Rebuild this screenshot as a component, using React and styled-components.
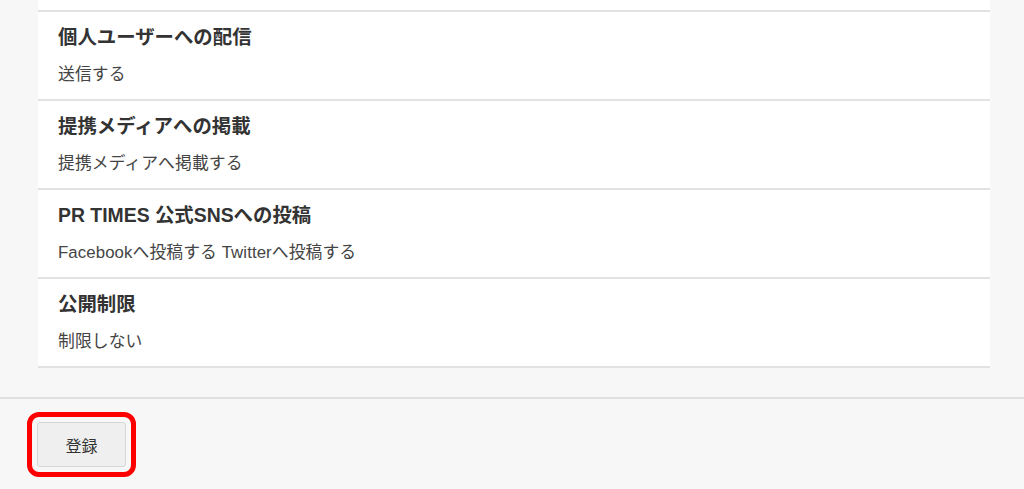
import React from 'react'
import styled, { createGlobalStyle } from 'styled-components'

const GlobalStyle = createGlobalStyle`
  html, body {
    margin: 0;
    padding: 0;
    background: #f7f7f7;
  }
  body {
    font-family: "Liberation Sans", "Noto Sans CJK JP", sans-serif;
    color: #333;
  }
`

const settings = [
  { title: '個人ユーザーへの配信', value: '送信する' },
  { title: '提携メディアへの掲載', value: '提携メディアへ掲載する' },
  { title: 'PR TIMES 公式SNSへの投稿', value: 'Facebookへ投稿する Twitterへ投稿する' },
  { title: '公開制限', value: '制限しない' },
]

const App = () => {
  return (
    <Page>
      <GlobalStyle />
      <Panel>
        <PrevTail />
        {settings.map((s, i) => (
          <Row key={i}>
            <Title>{s.title}</Title>
            <Value>{s.value}</Value>
          </Row>
        ))}
      </Panel>
      <Footer>
        <Highlight>
          <SubmitButton type="button">登録</SubmitButton>
        </Highlight>
      </Footer>
    </Page>
  )
}

const Page = styled.div`
  width: 1024px;
  height: 489px;
  overflow: hidden;
  display: flex;
  flex-direction: column;
`

const Panel = styled.div`
  margin: 0 34px 0 38px;
  background: #fff;
  border-bottom: 2px solid #e2e2e2;
`

const PrevTail = styled.div`
  height: 10px;
`

const Row = styled.div`
  border-top: 2px solid #e2e2e2;
  padding: 13px 20px 12px;
  display: flex;
  flex-direction: column;
  gap: 14px;
`

const Title = styled.div`
  font-size: 19.4px;
  line-height: 24px;
  font-weight: bold;
  color: #333;
`

const Value = styled.div`
  font-size: 16.8px;
  line-height: 24px;
  color: #444;
  letter-spacing: 0.1px;
`

const Footer = styled.div`
  margin-top: 29px;
  border-top: 2px solid #e0e0e0;
  padding: 13px 0 0 27px;
  display: flex;
`

const Highlight = styled.div`
  display: inline-flex;
  padding: 5px;
  border: 5px solid #ff0000;
  border-radius: 12px;
`

const SubmitButton = styled.button`
  width: 89px;
  height: 45px;
  background: #efefef;
  border: 1px solid #d6d6d6;
  border-radius: 3px;
  font-family: "Liberation Sans", "Noto Sans CJK JP", sans-serif;
  font-size: 16px;
  color: #333;
  cursor: pointer;
  padding: 0;
`

export default App
